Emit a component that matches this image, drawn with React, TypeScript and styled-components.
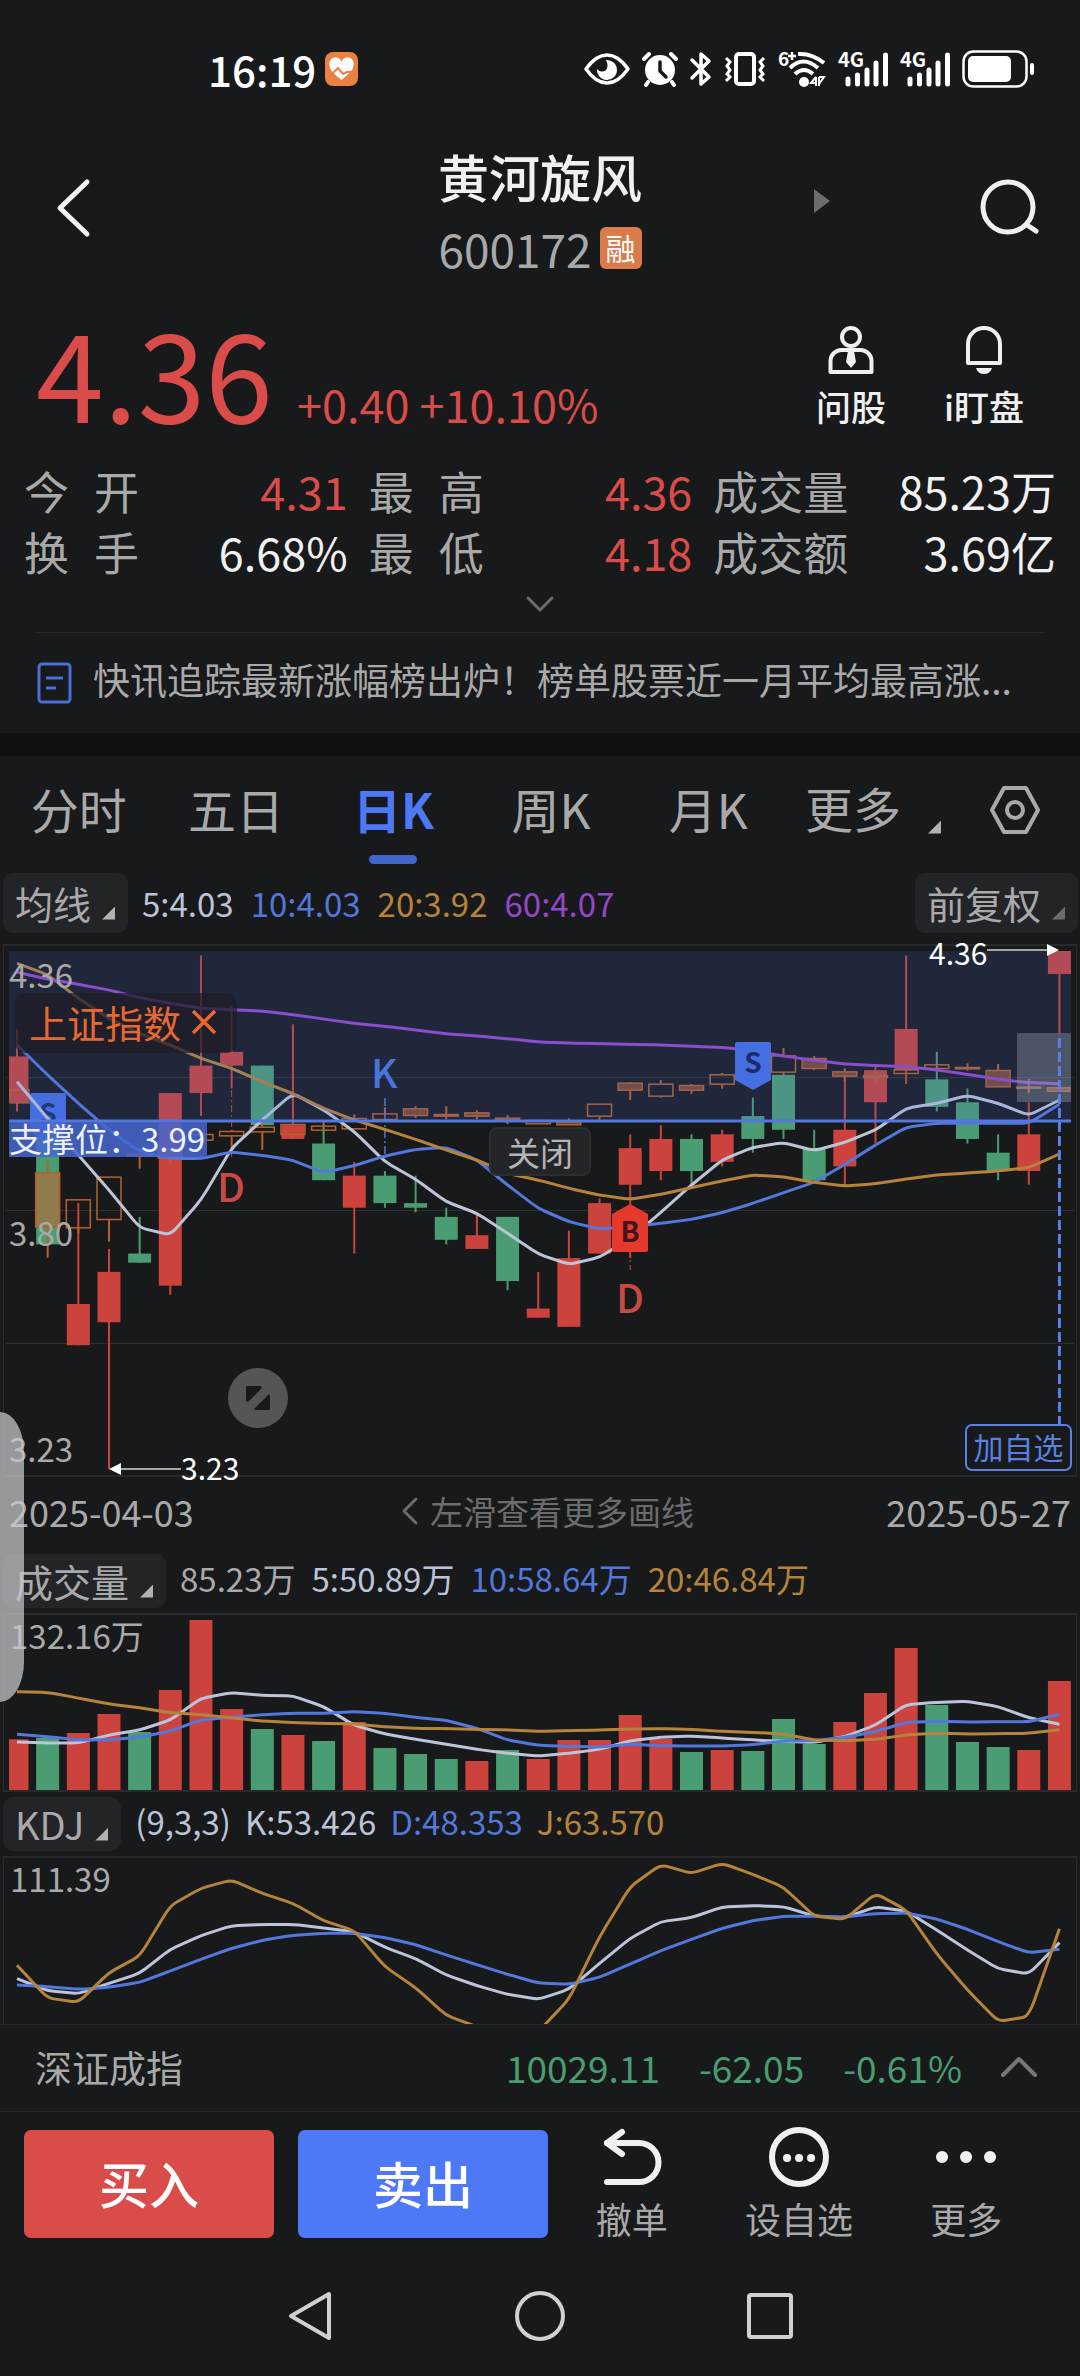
import React from "react";
import styled, { createGlobalStyle } from "styled-components";

const color = {
  bg: "#17191a",
  band: "#101113",
  pill: "#232427",
  line: "#27292b",
  text: "#f0f0f0",
  muted: "#a9a9a9",
  faint: "#6b6c6d",
  red: "#d94c49",
  candleRed: "#cb433c",
  green: "#4a9d72",
  blue: "#4d79f6",
  maBlue: "#5377db",
  maWhite: "#bcc4d9",
  maGold: "#b5833c",
  maPurple: "#9447c8",
  index: "#b5622f",
};

const Global = createGlobalStyle`
  * { box-sizing: border-box; }
  html, body { margin: 0; background: ${color.bg}; }
  body {
    color: ${color.text};
    font-family: "Noto Sans CJK SC", "Noto Sans", sans-serif;
  }
  button {
    margin: 0; padding: 0; border: 0; background: none;
    color: inherit; font: inherit; cursor: pointer;
  }
  svg { display: block; flex: none; overflow: visible; }
`;

const Page = styled.div`
  position: relative;
  display: flex;
  flex-direction: column;
  overflow: hidden;
`;

/* ---------- status bar ---------- */

const StatusBar = styled.div`
  display: flex;
  align-items: center;
  justify-content: space-between;
  height: 140px;
  padding: 0 46px 3px 208px;
`;

const Clock = styled.div`
  display: flex;
  align-items: center;
  gap: 9px;
  font-size: 42px;
  line-height: 56px;
  font-weight: 500;
  color: #fff;
`;

const StatusIcons = styled.div`
  display: flex;
  align-items: center;
  gap: 12px;
`;

/* ---------- header ---------- */

const Header = styled.header`
  display: grid;
  grid-template-columns: 1fr 580px 1fr;
  align-items: center;
  padding: 0 38px;
`;

const BackButton = styled.button`
  justify-self: start;
  padding-left: 17px;
`;

const SearchButton = styled.button`
  justify-self: end;
`;

const TitleArea = styled.div`
  display: grid;
  grid-template-columns: 1fr auto 1fr;
  align-items: center;
`;

const TitleBlock = styled.div`
  grid-column: 2;
  display: flex;
  flex-direction: column;
  align-items: center;
  gap: 8px;
`;

const StockName = styled.h1`
  margin: 0;
  font-size: 51px;
  line-height: 72px;
  font-weight: 500;
`;

const CodeRow = styled.div`
  display: flex;
  align-items: center;
  gap: 8px;
  height: 56px;
  font-size: 46px;
  line-height: 56px;
  color: ${color.muted};
`;

const MarginTag = styled.span`
  width: 42px;
  height: 42px;
  border-radius: 6px;
  background: #d97b4b;
  color: #fff;
  font-size: 30px;
  line-height: 40px;
  text-align: center;
`;

const NextButton = styled.button`
  justify-self: end;
  margin-bottom: 14px;
`;

/* ---------- quote ---------- */

const Quote = styled.section`
  display: flex;
  align-items: flex-end;
  justify-content: space-between;
  margin-top: 24px;
  padding: 0 56px 0 36px;
`;

const PriceLine = styled.div`
  display: flex;
  align-items: baseline;
  gap: 24px;
  color: ${color.red};
`;

const Price = styled.strong`
  font-size: 122px;
  line-height: 140px;
  font-weight: 400;
`;

const Change = styled.span`
  font-size: 45px;
  line-height: 60px;
`;

const QuickActions = styled.div`
  display: flex;
  gap: 58px;
  padding-bottom: 10px;
`;

const QuickAction = styled.button`
  display: flex;
  flex-direction: column;
  align-items: center;
  gap: 8px;
  font-size: 35px;
  line-height: 48px;
  font-weight: 500;
`;

const Stats = styled.dl`
  display: grid;
  grid-template-columns: 324fr 324fr 343fr;
  column-gap: 21px;
  margin: 20px 0 0;
  padding: 0 24px;
`;

const Stat = styled.div`
  display: flex;
  justify-content: space-between;
  font-size: 45px;
  line-height: 61px;
  white-space: nowrap;
`;

const StatLabel = styled.dt<{ $spread?: boolean }>`
  color: ${color.muted};
  width: ${(p) => (p.$spread ? "115px" : "auto")};
  text-align-last: justify;
`;

const StatValue = styled.dd<{ $up?: boolean }>`
  margin: 0;
  color: ${(p) => (p.$up ? color.red : color.text)};
`;

const ExpandButton = styled.button`
  align-self: center;
  display: flex;
  align-items: center;
  height: 44px;
`;

const News = styled.a`
  display: flex;
  align-items: center;
  gap: 20px;
  height: 101px;
  margin: 6px 36px 0;
  border-top: 1px solid ${color.line};
  color: ${color.muted};
  font-size: 37px;
  line-height: 50px;
  text-decoration: none;
  white-space: nowrap;
`;

const NewsText = styled.span`
  padding-bottom: 8px;
`;

const Band = styled.div`
  height: 23px;
  background: ${color.band};
`;

/* ---------- period tabs ---------- */

const TabBar = styled.nav`
  display: flex;
  align-items: stretch;
  height: 108px;
  padding-right: 40px;
`;

const Tabs = styled.div`
  flex: 1;
  display: grid;
  grid-template-columns: repeat(5, 1fr);
`;

const Tab = styled.button<{ $active?: boolean }>`
  display: flex;
  flex-direction: column;
  align-items: center;
  padding-top: 5px;
  font-size: 48px;
  line-height: 94px;
  font-weight: ${(p) => (p.$active ? 700 : 400)};
  color: ${(p) => (p.$active ? color.blue : color.muted)};

  &::after {
    content: "";
    width: 48px;
    height: 9px;
    border-radius: 5px;
    background: ${(p) => (p.$active ? "#3f66c8" : "transparent")};
  }
`;

const MoreTab = styled.button`
  display: flex;
  align-items: center;
  gap: 27px;
  margin: 0 49px 0 18px;
  padding-bottom: 6px;
  font-size: 48px;
  line-height: 94px;
  color: ${color.muted};
`;

const Corner = styled.i<{ $dim?: boolean; $low?: boolean }>`
  width: 13px;
  height: 13px;
  margin-top: ${(p) => (p.$low ? "40px" : "20px")};
  background: ${(p) => (p.$dim ? color.faint : "#b2b2b2")};
  clip-path: polygon(100% 0, 100% 100%, 0 100%);
`;

/* ---------- indicator rows ---------- */

const Pill = styled.button`
  display: flex;
  align-items: center;
  gap: 11px;
  height: 100%;
  padding: 0 13px 0 12px;
  border-radius: 10px;
  background: ${color.pill};
  color: ${color.muted};
  font-size: 38px;
  line-height: 50px;
  white-space: nowrap;
`;

const Values = styled.div<{ $gap: number }>`
  flex: 1;
  display: flex;
  gap: ${(p) => p.$gap}px;
  margin-left: 14px;
  font-size: 33px;
  line-height: 48px;
  white-space: nowrap;
`;

const Value = styled.span<{ $color: string }>`
  color: ${(p) => p.$color};
`;

const IndicatorRow = styled.div<{ $tall?: boolean }>`
  display: flex;
  align-items: center;
  height: ${(p) => (p.$tall ? "60px" : "54px")};
  margin-top: ${(p) => (p.$tall ? "9px" : "0")};
  padding: 0 2px 0 3px;

  ${Values} {
    padding-bottom: ${(p) => (p.$tall ? "0" : "6px")};
  }
`;

const ChartBox = styled.div<{ $gap?: boolean }>`
  position: relative;
  margin-top: ${(p) => (p.$gap ? "7px" : "0")};
`;

const Plot = styled.svg<{ $clip?: boolean }>`
  width: 100%;
  height: auto;
  overflow: ${(p) => (p.$clip ? "hidden" : "visible")};

  text { font-size: 33px; fill: ${color.muted}; }
  text.mark { font-size: 40px; font-weight: 500; }
  text.flag { font-size: 28px; font-weight: 700; text-anchor: middle; }
  text.peak { font-size: 30px; fill: #fff; }
`;

/* ---------- controls floating over the chart ---------- */

const IndexChip = styled.button`
  position: absolute;
  left: 15px;
  top: 53px;
  display: flex;
  align-items: center;
  gap: 11px;
  height: 60px;
  padding: 0 21px 2px 14px;
  border-radius: 10px;
  background: rgba(30, 28, 38, 0.72);
  color: #e8692f;
  font-size: 38px;
  line-height: 54px;
`;

const CloseChip = styled.button`
  position: absolute;
  left: 489px;
  top: 187px;
  width: 102px;
  height: 49px;
  border: 2px solid #2b2d2f;
  border-radius: 8px;
  background: #232528;
  color: #b4b4b4;
  font-size: 33px;
  line-height: 44px;
`;

const ResizeButton = styled.button`
  position: absolute;
  left: 228px;
  top: 428px;
`;

const WatchButton = styled.button`
  position: absolute;
  right: 8px;
  top: 484px;
  width: 107px;
  height: 47px;
  padding-bottom: 4px;
  border: 2px solid #5a80e4;
  border-radius: 7px;
  background: ${color.bg};
  color: #5a80e4;
  font-size: 30px;
  line-height: 38px;
`;

const EdgeHandle = styled.div`
  position: absolute;
  z-index: 2;
  left: 0;
  top: 472px;
  width: 24px;
  height: 290px;
  border-radius: 0 24px 24px 0 / 0 40px 40px 0;
  background: rgba(200, 201, 202, 0.72);
`;

const DateRow = styled.div`
  display: flex;
  align-items: center;
  justify-content: space-between;
  height: 44px;
  margin-bottom: 20px;
  padding: 0 9px 2px;
  font-size: 36px;
  line-height: 42px;
  color: ${color.muted};
`;

const SwipeHint = styled.button`
  display: flex;
  align-items: center;
  gap: 12px;
  padding-left: 16px;
  font-size: 33px;
  line-height: 42px;
  color: ${color.faint};
`;

/* ---------- market index row ---------- */

const MarketRow = styled.div`
  display: flex;
  align-items: center;
  gap: 39px;
  height: 88px;
  padding: 0 43px 2px 35px;
  border-top: 1px solid ${color.line};
  border-bottom: 1px solid ${color.line};
  color: ${color.green};
  font-size: 37px;
  line-height: 52px;
`;

const MarketName = styled.span`
  flex: 1;
  color: ${color.muted};
`;

/* ---------- trade bar ---------- */

const TradeBar = styled.div`
  display: flex;
  height: 144px;
  padding: 18px 30px 0 24px;
`;

const TradeButtons = styled.div`
  flex: 524;
  display: flex;
  gap: 24px;
`;

const TradeButton = styled.button<{ $color: string }>`
  flex: 1;
  height: 108px;
  padding-bottom: 4px;
  border-radius: 7px;
  background: ${(p) => p.$color};
  color: #fff;
  font-size: 50px;
  line-height: 72px;
  font-weight: 500;
`;

const Tools = styled.div`
  flex: 502;
  display: grid;
  grid-template-columns: repeat(3, 1fr);
  margin-top: -4px;
`;

const Tool = styled.button`
  display: flex;
  flex-direction: column;
  align-items: center;
  gap: 5px;
  color: ${color.muted};
  font-size: 36px;
  line-height: 50px;
`;

const SystemNav = styled.nav`
  display: grid;
  grid-template-columns: repeat(3, 1fr);
  height: 120px;
  padding: 0 18%;
`;

const NavButton = styled.button`
  display: flex;
  align-items: center;
  justify-content: center;
`;

/* ---------- data ---------- */

// Prices in cents: body top, body bottom, high, low, and whether the day rose.
type Candle = [number, number, number, number, 0 | 1];

const candles: Candle[] = [
  [413, 403, 419, 401, 1],
  [397, 372, 397, 372, 0],
  [359, 350, 381, 350, 1],
  [366, 355, 371, 323, 1],
  [370, 368, 378, 368, 0],
  [405, 363, 405, 361, 1],
  [411, 405, 435, 400, 1],
  [414, 411, 424, 406, 1],
  [411, 398, 411, 398, 0],
  [398, 395, 420, 395, 1],
  [394, 386, 398, 386, 0],
  [387, 380, 390, 370, 1],
  [387, 381, 388, 380, 0],
  [381, 380, 387, 379, 0],
  [378, 373, 380, 372, 0],
  [374, 371, 379, 371, 1],
  [378, 364, 378, 362, 0],
  [358, 356, 366, 356, 1],
  [369, 354, 375, 354, 1],
  [381, 370, 382, 370, 1],
  [393, 385, 396, 369, 1],
  [395, 388, 398, 386, 1],
  [395, 388, 396, 385, 0],
  [396, 390, 397, 389, 1],
  [400, 395, 404, 392, 0],
  [409, 397, 409, 395, 0],
  [393, 386, 397, 386, 0],
  [397, 389, 409, 385, 1],
  [410, 403, 411, 394, 1],
  [419, 410, 435, 407, 1],
  [408, 402, 414, 401, 0],
  [403, 395, 406, 394, 0],
  [392, 388, 396, 386, 0],
  [396, 388, 403, 385, 1],
  [436, 431, 436, 418, 1],
];

// Series levels are kept in plot units, three to one pixel, growing downwards.
// Index candles: top, bottom, high, low, filled.
const indexCandles: Candle[] = [
  [478, 520, 478, 520, 0],
  [727, 892, 690, 983, 1],
  [808, 895, 808, 910, 0],
  [740, 870, 740, 935, 0],
  [670, 680, 655, 716, 1],
  [655, 685, 650, 698, 0],
  [612, 632, 612, 632, 0],
  [603, 619, 600, 660, 0],
  [590, 607, 580, 660, 0],
  [582, 615, 582, 622, 0],
  [587, 602, 575, 602, 0],
  [564, 598, 553, 598, 0],
  [550, 570, 532, 570, 0],
  [535, 558, 529, 564, 1],
  [552, 560, 529, 568, 1],
  [547, 560, 541, 567, 1],
  [563, 569, 555, 583, 1],
  [570, 583, 570, 583, 0],
  [575, 586, 565, 586, 1],
  [521, 560, 521, 569, 0],
  [458, 482, 456, 510, 1],
  [461, 500, 450, 503, 0],
  [465, 482, 462, 492, 1],
  [433, 464, 429, 476, 0],
  [402, 430, 402, 430, 1],
  [376, 428, 354, 435, 0],
  [384, 417, 378, 420, 1],
  [424, 440, 415, 455, 1],
  [435, 444, 425, 456, 1],
  [418, 432, 403, 432, 0],
  [403, 417, 400, 417, 0],
  [411, 418, 400, 422, 1],
  [420, 472, 402, 472, 1],
  [470, 476, 446, 490, 1],
  [472, 485, 472, 485, 1],
];

const ma5 = [455, 565, 675, 780, 893, 915, 810, 655, 570, 490, 540, 605, 695, 748, 815, 850, 910, 972, 1003, 982, 925, 847, 765, 690, 652, 638, 662, 637, 600, 535, 520, 496, 520, 556, 510];
const ma10 = [345, 435, 520, 600, 665, 685, 686, 666, 676, 691, 728, 707, 678, 658, 652, 690, 765, 835, 875, 897, 890, 880, 868, 848, 820, 788, 757, 703, 645, 592, 580, 580, 580, 580, 523];
const ma20 = [100, 134, 205, 265, 311, 345, 385, 415, 455, 491, 535, 570, 598, 628, 660, 690, 730, 750, 775, 795, 808, 793, 773, 753, 735, 741, 757, 768, 761, 747, 735, 729, 723, 713, 672];
const ma60 = [127, 147, 163, 180, 203, 220, 235, 239, 243, 254, 267, 280, 289, 300, 311, 318, 326, 336, 339, 341, 343, 345, 349, 352, 362, 378, 391, 402, 407, 410, 420, 433, 448, 458, 461];

const volumes = [598, 594, 579, 522, 576, 450, 240, 507, 567, 585, 603, 546, 624, 642, 657, 663, 630, 657, 600, 600, 525, 597, 636, 630, 633, 537, 612, 546, 459, 324, 495, 606, 621, 630, 423];
const vol5 = [606, 609, 609, 585, 570, 540, 475, 458, 466, 468, 500, 556, 582, 598, 613, 628, 640, 648, 640, 628, 602, 592, 588, 594, 600, 604, 607, 590, 555, 494, 487, 484, 500, 533, 553];
const vol10 = [583, 590, 600, 599, 592, 573, 540, 532, 524, 520, 520, 515, 520, 532, 541, 565, 600, 616, 619, 621, 613, 617, 618, 618, 614, 603, 602, 592, 575, 547, 544, 546, 545, 545, 523];
const vol20 = [455, 457, 474, 492, 503, 518, 524, 534, 543, 548, 550, 552, 560, 565, 566, 568, 570, 574, 572, 570, 567, 566, 568, 574, 577, 582, 600, 602, 598, 585, 579, 582, 581, 580, 569];

const kLine = [1316, 1352, 1361, 1330, 1300, 1228, 1187, 1157, 1154, 1153, 1164, 1175, 1222, 1256, 1305, 1337, 1363, 1378, 1348, 1270, 1195, 1145, 1133, 1101, 1097, 1100, 1128, 1133, 1101, 1113, 1170, 1230, 1286, 1302, 1208];
const dLine = [1335, 1340, 1348, 1342, 1327, 1293, 1258, 1225, 1201, 1186, 1180, 1180, 1193, 1214, 1245, 1274, 1303, 1329, 1333, 1312, 1272, 1232, 1198, 1165, 1142, 1129, 1129, 1131, 1121, 1119, 1137, 1168, 1205, 1238, 1228];
const jLine = [1276, 1374, 1387, 1298, 1248, 1097, 1045, 1020, 1060, 1090, 1142, 1172, 1280, 1343, 1426, 1460, 1490, 1475, 1378, 1190, 1040, 974, 1000, 970, 1003, 1042, 1128, 1138, 1060, 1110, 1242, 1350, 1444, 1430, 1166];

/* ---------- scales ---------- */

const xOf = (i: number) => 17 + i * 30.66;
const priceY = (cents: number) => 11 + (436 - cents) * 4.584;
const mainY = (v: number) => v / 3 - 10;
const volumeY = (v: number) => v / 3 - 68;
const kdjY = (v: number) => (v - 933) / 3;

// Straight segments whose joints are slightly rounded off.
function linePath(values: number[], toY: (v: number) => number) {
  const pts = values.map((v, i) => [xOf(i), toY(v)]);
  let d = `M${pts[0][0]} ${pts[0][1]}`;
  for (let i = 1; i < pts.length - 1; i++) {
    const [px, py] = pts[i - 1];
    const [x, y] = pts[i];
    const [nx, ny] = pts[i + 1];
    d += `L${x + (px - x) * 0.2} ${y + (py - y) * 0.2}`;
    d += `Q${x} ${y} ${x + (nx - x) * 0.2} ${y + (ny - y) * 0.2}`;
  }
  const last = pts[pts.length - 1];
  return `${d}L${last[0]} ${last[1]}`;
}

function Line({ values, toY, stroke }: { values: number[]; toY: (v: number) => number; stroke: string }) {
  return <path d={linePath(values, toY)} fill="none" stroke={stroke} strokeWidth={3} />;
}

function Frame({ top, bottom }: { top: number; bottom: number }) {
  return (
    <g fill="none" stroke={color.line}>
      <path d={`M3 ${top}H1077M3 ${bottom}H1077`} strokeWidth={2} />
      <path d={`M3.5 ${top}V${bottom}M1076.5 ${top}V${bottom}`} />
    </g>
  );
}

const tone = (up: number) => (up ? color.candleRed : color.green);

function bodyBox(i: number) {
  const left = Math.max(9, xOf(i) - 11.5);
  return { x: left, width: xOf(i) + 11.5 - left };
}

function Flag({ x, y, kind }: { x: number; y: number; kind: "S" | "B" }) {
  const sell = kind === "S";
  return (
    <g>
      <path
        d={
          sell
            ? `M${x - 16} ${y}h32q2 0 2 2v36l-18 10l-18 -10v-36q0 -2 2 -2z`
            : `M${x - 18} ${y + 10}l18 -10l18 10v36q0 2 -2 2h-32q-2 0 -2 -2z`
        }
        fill={sell ? "#456ee0" : "#e5392d"}
      />
      <text className="flag" x={x} y={sell ? y + 31 : y + 38} style={{ fill: sell ? "#1b2d66" : "#431419" }}>
        {kind}
      </text>
    </g>
  );
}

function MainChart() {
  return (
    <Plot viewBox="0 0 1080 550" role="img" aria-label="日K">
      <Frame top={5} bottom={536} />
      <path d="M6 137.500H1074M6 270.500H1074M6 403.500H1074" stroke="#2c2e30" />

      {candles.map(([top, bottom, high, low, up], i) => (
        <g key={i} fill={tone(up)} stroke="none">
          <rect x={xOf(i) - 1} width={2} y={priceY(high)} height={priceY(low) - priceY(high)} />
          <rect {...bodyBox(i)} y={priceY(top)} height={priceY(bottom) - priceY(top)} />
        </g>
      ))}

      {indexCandles.map(([top, bottom, high, low, filled], i) => {
        const left = Math.max(10, xOf(i) - 12);
        const right = Math.min(1070, xOf(i) + 12);
        return (
          <g key={i} stroke={color.index} strokeWidth={1.5} fill={filled ? "rgba(190,100,50,.6)" : "none"}>
            <path d={`M${xOf(i)} ${mainY(high)}V${mainY(top)}M${xOf(i)} ${mainY(bottom)}V${mainY(low)}`} strokeWidth={2} />
            <rect x={left} width={right - left} y={mainY(top) + 0.5} height={mainY(bottom) - mainY(top) - 1} />
          </g>
        );
      })}

      <path d={`M${xOf(7)} 150V220M${xOf(20)} 310V330`} stroke={color.candleRed} strokeDasharray="7 3 2 3" />
      <path d={`M${xOf(12)} 158V216`} stroke={color.maBlue} strokeWidth={1.5} strokeDasharray="8 3 2 3" />

      <Flag x={48} y={153} kind="S" />
      <Line values={ma5} toY={mainY} stroke={color.maWhite} />
      <Line values={ma10} toY={mainY} stroke={color.maBlue} />
      <Line values={ma20} toY={mainY} stroke={color.maGold} />
      <Line values={ma60} toY={mainY} stroke={color.maPurple} />

      <rect x={9} y={11} width={1062} height={170} fill="rgba(75,112,224,.17)" />
      <rect x={1017} y={93} width={54} height={69} fill="rgba(150,160,180,.38)" />
      <path d="M9 181H1071" stroke={color.maBlue} strokeWidth={3} />
      <path d={`M${xOf(34)} 98V484`} stroke="#5a80e4" strokeWidth={3} strokeDasharray="10 4" />

      <Flag x={753} y={102} kind="S" />
      <Flag x={630} y={264} kind="B" />

      <text x={9} y={48}>4.36</text>
      <text x={9} y={306}>3.80</text>
      <text x={9} y={522}>3.23</text>

      <rect x={9} y={182} width={198} height={35} fill="rgba(70,102,208,.86)" />
      <text x={9} y={212} style={{ fill: "#eef2ff" }}>支撑位：3.99</text>

      <text className="mark" x={371} y={148} style={{ fill: "#4a74d8" }}>K</text>
      <text className="mark" x={217} y={262} style={{ fill: "#c84a44" }}>D</text>
      <text className="mark" x={616} y={373} style={{ fill: "#c84a44" }}>D</text>

      <path d="M987 10H1048M120 529H181" stroke="#a4a4a4" strokeWidth={2} />
      <path d="M1047 4L1059 10L1047 16zM121 523L109 529L121 535z" fill="#fff" />
      <text className="peak" x={929} y={25}>4.36</text>
      <text className="peak" x={181} y={540}>3.23</text>
    </Plot>
  );
}

function VolumeChart() {
  return (
    <Plot viewBox="0 0 1080 189" role="img" aria-label="成交量">
      <Frame top={6} bottom={183} />
      <text x={10} y={41}>132.16万</text>
      {volumes.map((v, i) => (
        <rect key={i} {...bodyBox(i)} y={volumeY(v)} height={182 - volumeY(v)} fill={tone(candles[i][4])} />
      ))}
      <Line values={vol5} toY={volumeY} stroke={color.maWhite} />
      <Line values={vol10} toY={volumeY} stroke={color.maBlue} />
      <Line values={vol20} toY={volumeY} stroke={color.maGold} />
    </Plot>
  );
}

function KdjChart() {
  return (
    <Plot $clip viewBox="0 0 1080 173" role="img" aria-label="KDJ">
      <Frame top={6} bottom={180} />
      <text x={10} y={41}>111.39</text>
      <Line values={kLine} toY={kdjY} stroke={color.maWhite} />
      <Line values={dLine} toY={kdjY} stroke={color.maBlue} />
      <Line values={jLine} toY={kdjY} stroke={color.maGold} />
    </Plot>
  );
}

/* ---------- icons ---------- */

function HeartIcon() {
  return (
    <svg width="33" height="34" viewBox="0 0 33 34">
      <rect width="33" height="34" rx="8" fill="#ea8043" />
      <path d="M16.500 28C9 22 4.500 18 4.500 13a6 6 0 0 1 12 -3a6 6 0 0 1 12 3C28.500 18 24 22 16.500 28z" fill="#fff" />
      <path d="M0 22h7l6 -6l5 6l4 -2h11" fill="none" stroke="#ea8043" strokeWidth="2" />
    </svg>
  );
}

function EyeIcon() {
  return (
    <svg width="46" height="32" viewBox="0 0 46 32">
      <path d="M2 16C9 6 15 2 23 2s14 4 21 14C37 26 31 30 23 30S9 26 2 16z" fill="none" stroke="#fff" strokeWidth="3.500" strokeLinejoin="round" />
      <path d="M22 7a10 10 0 1 1 -9 9a6 6 0 0 0 9 1q3 -4 0 -10z" fill="#fff" />
    </svg>
  );
}

function AlarmIcon() {
  return (
    <svg width="36" height="36" viewBox="0 0 36 36">
      <circle cx="18" cy="19" r="15" fill="#fff" />
      <path d="M2 8L7 3M34 8L29 3M6 31L4 34M30 31L32 34" stroke="#fff" strokeWidth="4" strokeLinecap="round" />
      <path d="M18 11v9l6 6" fill="none" stroke={color.bg} strokeWidth="3.500" strokeLinecap="round" />
    </svg>
  );
}

function BluetoothIcon() {
  return (
    <svg width="22" height="36" viewBox="0 0 22 36">
      <path d="M2 9L19 26L11 33V3L19 10L2 27" fill="none" stroke="#fff" strokeWidth="3.500" strokeLinejoin="round" strokeLinecap="round" />
    </svg>
  );
}

function VibrateIcon() {
  return (
    <svg width="42" height="36" viewBox="0 0 42 36">
      <rect x="12" y="3" width="18" height="30" rx="3" fill="none" stroke="#fff" strokeWidth="4" />
      <path d="M2 7l4 4l-3 4l3 4l-3 4l3 3l-4 4M40 7l-4 4l3 4l-3 4l3 4l-3 3l4 4" fill="none" stroke="#fff" strokeWidth="3" />
    </svg>
  );
}

function WifiIcon() {
  return (
    <svg width="48" height="38" viewBox="0 0 48 38">
      <text x="0" y="16" fontSize="19" fontWeight="700" fill="#fff">6</text>
      <path d="M10 6h8M14 2v8" stroke="#fff" strokeWidth="2.500" />
      <path d="M20 4Q34 3 46 13M12 18Q25 5 40 18M17 24Q26 16 35 24" fill="none" stroke="#fff" strokeWidth="4" />
      <circle cx="26" cy="32" r="5" fill="#fff" />
      <path d="M38 27v9M38 27l-5 6h5M41 36v-9M41 27h5l-5 7" fill="none" stroke="#fff" strokeWidth="2" />
    </svg>
  );
}

function SignalIcon() {
  return (
    <svg width="50" height="38" viewBox="0 0 50 38">
      <text x="0" y="17" fontSize="20" fontWeight="700" fill="#fff">4G</text>
      <path d="M10 29v5M19.500 25v9M29 20v14M38 13v21M47.500 5v29" stroke="#fff" strokeWidth="5" strokeLinecap="round" />
    </svg>
  );
}

function BatteryIcon() {
  return (
    <svg width="72" height="38" viewBox="0 0 72 38">
      <rect x="1.500" y="1.500" width="63" height="35" rx="10" fill="none" stroke="#fff" strokeWidth="2.500" />
      <rect x="6" y="6" width="43" height="26" rx="5" fill="#fff" />
      <rect x="68" y="13" width="4" height="12" rx="2" fill="#fff" />
    </svg>
  );
}

function Chevron({ points, w, h, stroke, width }: { points: string; w: number; h: number; stroke: string; width: number }) {
  return (
    <svg width={w} height={h} viewBox={`0 0 ${w} ${h}`}>
      <polyline points={points} fill="none" stroke={stroke} strokeWidth={width} strokeLinecap="round" strokeLinejoin="round" />
    </svg>
  );
}

function SearchIcon() {
  return (
    <svg width="64" height="60" viewBox="0 0 64 60">
      <circle cx="30" cy="29" r="25" fill="none" stroke={color.text} strokeWidth="5" />
      <path d="M49 47L58 53" stroke={color.text} strokeWidth="5" strokeLinecap="round" />
    </svg>
  );
}

function AdvisorIcon() {
  return (
    <svg width="46" height="48" viewBox="0 0 46 48" fill="none" stroke={color.text} strokeWidth="4">
      <circle cx="23" cy="11" r="9" />
      <path d="M2.500 46V35a11 11 0 0 1 11 -11h19a11 11 0 0 1 11 11V46z" strokeLinejoin="round" />
      <path d="M20 25h6l2 11l-5 6l-5 -6z" fill={color.text} stroke="none" />
    </svg>
  );
}

function BellIcon() {
  return (
    <svg width="36" height="48" viewBox="0 0 36 48">
      <path d="M2 37V18a16 16 0 0 1 32 0V37z" fill="none" stroke={color.text} strokeWidth="4" strokeLinejoin="round" />
      <path d="M10 42h16q-2 6 -8 6t-8 -6z" fill={color.text} />
    </svg>
  );
}

function NewsIcon() {
  return (
    <svg width="37" height="42" viewBox="0 0 37 42" fill="none" stroke="#4a6fd6" strokeWidth="3">
      <rect x="3" y="2" width="31" height="38" rx="3" />
      <path d="M10 16h17M10 26h10" />
    </svg>
  );
}

function HexIcon() {
  return (
    <svg width="50" height="48" viewBox="0 0 50 48" fill="none" stroke={color.muted} strokeWidth="4" strokeLinejoin="round">
      <path d="M14 2H36L48 24L36 46H14L2 24z" />
      <circle cx="25" cy="24" r="8" />
    </svg>
  );
}

function ResizeIcon() {
  return (
    <svg width="60" height="60" viewBox="0 0 60 60">
      <circle cx="30" cy="30" r="30" fill="#555" />
      <path d="M19 18H33L34 20L20 34L18 33V19zM41 26L42 28V41L41 42H27L26 41z" fill={color.bg} />
    </svg>
  );
}

function CrossIcon() {
  return (
    <svg width="24" height="24" viewBox="0 0 24 24">
      <path d="M1 1L23 23M23 1L1 23" stroke="#e8692f" strokeWidth="3.500" />
    </svg>
  );
}

function UndoIcon() {
  return (
    <svg width="60" height="62" viewBox="0 0 60 62" fill="none" stroke={color.text} strokeWidth="6" strokeLinecap="round" strokeLinejoin="round">
      <path d="M20 6L5 17L20 28" />
      <path d="M5 17H37a19 19 0 0 1 0 39H5" />
    </svg>
  );
}

function RoundDotsIcon() {
  return (
    <svg width="60" height="62" viewBox="0 0 60 62">
      <circle cx="30" cy="31" r="27" fill="none" stroke={color.text} strokeWidth="6" />
      <path d="M18 32h.1M30 32h.1M42 32h.1" stroke={color.text} strokeWidth="8" strokeLinecap="round" />
    </svg>
  );
}

function DotsIcon() {
  return (
    <svg width="60" height="62" viewBox="0 0 60 62">
      <path d="M6 31h.1M30 31h.1M54 31h.1" stroke={color.text} strokeWidth="12" strokeLinecap="round" />
    </svg>
  );
}

/* ---------- page ---------- */

const stats = [
  { label: "今 开", value: "4.31", up: true, spread: true },
  { label: "最 高", value: "4.36", up: true, spread: true },
  { label: "成交量", value: "85.23万" },
  { label: "换 手", value: "6.68%", spread: true },
  { label: "最 低", value: "4.18", up: true, spread: true },
  { label: "成交额", value: "3.69亿" },
];

const tabs = ["分时", "五日", "日K", "周K", "月K"];

export default function App() {
  return (
    <Page>
      <Global />
      <StatusBar>
        <Clock>
          16:19
          <HeartIcon />
        </Clock>
        <StatusIcons>
          <EyeIcon />
          <AlarmIcon />
          <BluetoothIcon />
          <VibrateIcon />
          <WifiIcon />
          <SignalIcon />
          <SignalIcon />
          <BatteryIcon />
        </StatusIcons>
      </StatusBar>

      <Header>
        <BackButton aria-label="返回">
          <Chevron points="32,4 5,30 32,56" w={37} h={60} stroke={color.text} width={5} />
        </BackButton>
        <TitleArea>
          <TitleBlock>
            <StockName>黄河旋风</StockName>
            <CodeRow>
              600172
              <MarginTag>融</MarginTag>
            </CodeRow>
          </TitleBlock>
          <NextButton aria-label="下一只">
            <svg width="16" height="24" viewBox="0 0 16 24">
              <path d="M0 0L16 12L0 24z" fill={color.faint} />
            </svg>
          </NextButton>
        </TitleArea>
        <SearchButton aria-label="搜索">
          <SearchIcon />
        </SearchButton>
      </Header>

      <Quote>
        <PriceLine>
          <Price>4.36</Price>
          <Change>+0.40 +10.10%</Change>
        </PriceLine>
        <QuickActions>
          <QuickAction>
            <AdvisorIcon />
            问股
          </QuickAction>
          <QuickAction>
            <BellIcon />
            i盯盘
          </QuickAction>
        </QuickActions>
      </Quote>

      <Stats>
        {stats.map((s) => (
          <Stat key={s.label}>
            <StatLabel $spread={s.spread}>{s.label}</StatLabel>
            <StatValue $up={s.up}>{s.value}</StatValue>
          </Stat>
        ))}
      </Stats>
      <ExpandButton aria-label="展开">
        <Chevron points="2,2 14,14 26,2" w={28} h={17} stroke={color.faint} width={3} />
      </ExpandButton>

      <News href="#news">
        <NewsIcon />
        <NewsText>快讯追踪最新涨幅榜出炉！榜单股票近一月平均最高涨...</NewsText>
      </News>
      <Band />

      <TabBar>
        <Tabs>
          {tabs.map((t) => (
            <Tab key={t} $active={t === "日K"}>
              {t}
            </Tab>
          ))}
        </Tabs>
        <MoreTab>
          更多
          <Corner $low />
        </MoreTab>
        <NavButton aria-label="设置">
          <HexIcon />
        </NavButton>
      </TabBar>

      <IndicatorRow $tall>
        <Pill>
          均线
          <Corner />
        </Pill>
        <Values $gap={17}>
          <Value $color={color.maWhite}>5:4.03</Value>
          <Value $color={color.maBlue}>10:4.03</Value>
          <Value $color={color.maGold}>20:3.92</Value>
          <Value $color={color.maPurple}>60:4.07</Value>
        </Values>
        <Pill>
          前复权
          <Corner $dim />
        </Pill>
      </IndicatorRow>

      <ChartBox $gap>
        <MainChart />
        <IndexChip>
          上证指数
          <CrossIcon />
        </IndexChip>
        <CloseChip>关闭</CloseChip>
        <ResizeButton aria-label="全屏">
          <ResizeIcon />
        </ResizeButton>
        <WatchButton>加自选</WatchButton>
        <EdgeHandle />
      </ChartBox>

      <DateRow>
        <span>2025-04-03</span>
        <SwipeHint>
          <Chevron points="14,2 2,14 14,26" w={16} h={28} stroke={color.faint} width={3} />
          左滑查看更多画线
        </SwipeHint>
        <span>2025-05-27</span>
      </DateRow>

      <IndicatorRow>
        <Pill>
          成交量
          <Corner />
        </Pill>
        <Values $gap={16}>
          <Value $color={color.muted}>85.23万</Value>
          <Value $color={color.maWhite}>5:50.89万</Value>
          <Value $color={color.maBlue}>10:58.64万</Value>
          <Value $color={color.maGold}>20:46.84万</Value>
        </Values>
      </IndicatorRow>
      <ChartBox>
        <VolumeChart />
      </ChartBox>

      <IndicatorRow>
        <Pill>
          KDJ
          <Corner />
        </Pill>
        <Values $gap={14}>
          <Value $color={color.maWhite}>(9,3,3)</Value>
          <Value $color={color.maWhite}>K:53.426</Value>
          <Value $color={color.maBlue}>D:48.353</Value>
          <Value $color={color.maGold}>J:63.570</Value>
        </Values>
      </IndicatorRow>
      <ChartBox>
        <KdjChart />
      </ChartBox>

      <MarketRow>
        <MarketName>深证成指</MarketName>
        <span>10029.11</span>
        <span>-62.05</span>
        <span>-0.61%</span>
        <Chevron points="2,18 18,2 34,18" w={36} h={21} stroke="#777" width={4} />
      </MarketRow>

      <TradeBar>
        <TradeButtons>
          <TradeButton $color={color.red}>买入</TradeButton>
          <TradeButton $color={color.blue}>卖出</TradeButton>
        </TradeButtons>
        <Tools>
          <Tool>
            <UndoIcon />
            撤单
          </Tool>
          <Tool>
            <RoundDotsIcon />
            设自选
          </Tool>
          <Tool>
            <DotsIcon />
            更多
          </Tool>
        </Tools>
      </TradeBar>

      <SystemNav>
        <NavButton aria-label="后退">
          <svg width="46" height="52" viewBox="0 0 46 52">
            <path d="M42 4V48L4 26z" fill="none" stroke="#d0d0d0" strokeWidth="4" strokeLinejoin="round" />
          </svg>
        </NavButton>
        <NavButton aria-label="主页">
          <svg width="52" height="52" viewBox="0 0 52 52">
            <circle cx="26" cy="26" r="23" fill="none" stroke="#d0d0d0" strokeWidth="4" />
          </svg>
        </NavButton>
        <NavButton aria-label="最近任务">
          <svg width="46" height="46" viewBox="0 0 46 46">
            <rect x="2" y="2" width="42" height="42" rx="2" fill="none" stroke="#d0d0d0" strokeWidth="4" />
          </svg>
        </NavButton>
      </SystemNav>
    </Page>
  );
}
